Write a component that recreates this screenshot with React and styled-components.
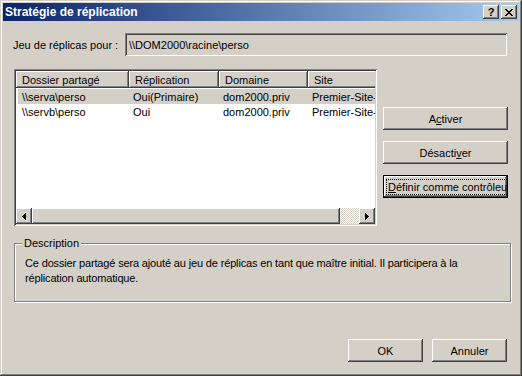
import React from "react";
import styled, { createGlobalStyle } from "styled-components";

const GlobalStyle = createGlobalStyle`
  html, body {
    margin: 0;
    padding: 0;
    background: #d4d0c8;
  }
  body {
    font-family: "Liberation Sans", Arial, sans-serif;
    font-size: 11px;
    color: #000;
  }
`;

const face = "#d4d0c8";

const raised = `
  background: ${face};
  box-shadow: inset -1px -1px #404040, inset 1px 1px #ffffff,
    inset -2px -2px #808080, inset 2px 2px ${face};
`;

const sunken = `
  box-shadow: inset 1px 1px #808080, inset -1px -1px #ffffff,
    inset 2px 2px #404040, inset -2px -2px ${face};
`;

const rows = [
  { dossier: "\\\\serva\\perso", replication: "Oui(Primaire)", domaine: "dom2000.priv", site: "Premier-Site-par-défaut", selected: true },
  { dossier: "\\\\servb\\perso", replication: "Oui", domaine: "dom2000.priv", site: "Premier-Site-par-défaut" },
];

const columns = [
  { label: "Dossier partagé", key: "dossier", width: 113 },
  { label: "Réplication", key: "replication", width: 90 },
  { label: "Domaine", key: "domaine", width: 89 },
  { label: "Site", key: "site", width: 120 },
];

const App = () => {
  return (
    <>
      <GlobalStyle />
      <Window>
        <TitleBar>
          <Title>Stratégie de réplication</Title>
          <TitleButton aria-label="Aide">
            <HelpGlyph>?</HelpGlyph>
          </TitleButton>
          <TitleButton aria-label="Fermer" $last>
            <svg width="8" height="7" viewBox="0 0 8 7" shapeRendering="crispEdges">
              <path d="M0 0h2v1h-2zM6 0h2v1h-2zM1 1h2v1h-2zM5 1h2v1h-2zM2 2h4v1h-4zM3 3h2v1h-2zM2 4h4v1h-4zM1 5h2v1h-2zM5 5h2v1h-2zM0 6h2v1h-2zM6 6h2v1h-2z" fill="#000" />
            </svg>
          </TitleButton>
        </TitleBar>

        <Body>
          <FieldRow>
            <FieldLabel>Jeu de réplicas pour :</FieldLabel>
            <Field>{"\\\\DOM2000\\racine\\perso"}</Field>
          </FieldRow>

          <MiddleRow>
            <ListView>
              <ListInner>
                <Header>
                  {columns.map((c) => (
                    <HeaderCell key={c.key} $w={c.width}>
                      {c.label}
                    </HeaderCell>
                  ))}
                </Header>
                <Rows>
                  {rows.map((r, i) => (
                    <Row key={i} $selected={r.selected}>
                      {columns.map((c) => (
                        <Cell key={c.key} $w={c.width}>
                          {r[c.key]}
                        </Cell>
                      ))}
                    </Row>
                  ))}
                </Rows>
                <ScrollBar>
                  <ArrowButton>
                    <svg width="4" height="7" viewBox="0 0 4 7" shapeRendering="crispEdges">
                      <path d="M0 3h1v1h-1zM1 2h1v3h-1zM2 1h1v5h-1zM3 0h1v7h-1z" fill="#000" />
                    </svg>
                  </ArrowButton>
                  <Thumb />
                  <Track />
                  <ArrowButton>
                    <svg width="4" height="7" viewBox="0 0 4 7" shapeRendering="crispEdges">
                      <path d="M0 0h1v7h-1zM1 1h1v5h-1zM2 2h1v3h-1zM3 3h1v1h-1z" fill="#000" />
                    </svg>
                  </ArrowButton>
                </ScrollBar>
              </ListInner>
            </ListView>

            <SideButtons>
              <Button>
                A<u>c</u>tiver
              </Button>
              <Button>
                Désacti<u>v</u>er
              </Button>
              <Button $default>
                <FocusText>
                  <u>D</u>éfinir comme contrôleur
                </FocusText>
              </Button>
            </SideButtons>
          </MiddleRow>

          <Group>
            <Legend>Description</Legend>
            <GroupText>
              Ce dossier partagé sera ajouté au jeu de réplicas en tant que maître initial. Il participera à la
              réplication automatique.
            </GroupText>
          </Group>

          <Footer>
            <Button $small>OK</Button>
            <Button $small>Annuler</Button>
          </Footer>
        </Body>
      </Window>
    </>
  );
};

const Window = styled.div`
  width: 522px;
  height: 376px;
  box-sizing: border-box;
  padding: 3px;
  background: ${face};
  box-shadow: inset -1px -1px #404040, inset 1px 1px ${face},
    inset -2px -2px #808080, inset 2px 2px #ffffff;
  display: flex;
  flex-direction: column;
`;

const TitleBar = styled.div`
  height: 18px;
  display: flex;
  align-items: center;
  padding: 0 2px 0 2px;
  background: linear-gradient(to right, #0a246a, #a6caf0);
`;

const Title = styled.div`
  flex: 1;
  color: #fff;
  font-weight: bold;
  font-size: 12px;
  white-space: nowrap;
`;

const TitleButton = styled.div`
  width: 16px;
  height: 14px;
  box-sizing: border-box;
  margin-left: ${(p) => (p.$last ? "2px" : "0")};
  display: flex;
  align-items: center;
  justify-content: center;
  ${raised}
`;

const HelpGlyph = styled.span`
  font-weight: bold;
  font-size: 11px;
  line-height: 11px;
  margin-top: 1px;
`;

const Body = styled.div`
  flex: 1;
  display: flex;
  flex-direction: column;
  padding: 12px 8px 0 11px;
`;

const FieldRow = styled.div`
  display: flex;
  align-items: center;
  margin-right: 4px;
`;

const FieldLabel = styled.div`
  width: 112px;
  margin-left: -1px;
  white-space: nowrap;
`;

const Field = styled.div`
  flex: 1;
  height: 23px;
  box-sizing: border-box;
  padding: 0 4px;
  display: flex;
  align-items: center;
  background: ${face};
  ${sunken}
`;

const MiddleRow = styled.div`
  display: flex;
  margin-top: 13px;
  margin-right: 4px;
  gap: 6px;
`;

const ListView = styled.div`
  width: 363px;
  height: 157px;
  box-sizing: border-box;
  padding: 2px;
  background: #fff;
  ${sunken}
`;

const ListInner = styled.div`
  height: 100%;
  display: flex;
  flex-direction: column;
  overflow: hidden;
`;

const Header = styled.div`
  display: flex;
  height: 17px;
  flex-shrink: 0;
`;

const HeaderCell = styled.div`
  width: ${(p) => p.$w}px;
  flex-shrink: 0;
  box-sizing: border-box;
  padding-left: 6px;
  display: flex;
  align-items: center;
  white-space: nowrap;
  overflow: hidden;
  background: ${face};
  box-shadow: inset -1px -1px #404040, inset 1px 1px #ffffff,
    inset -2px -2px #808080;
`;

const Rows = styled.div`
  flex: 1;
  padding-top: 1px;
`;

const Row = styled.div`
  display: flex;
  height: 15px;
  margin-left: 2px;
  background: ${(p) => (p.$selected ? face : "#fff")};
`;

const Cell = styled.div`
  width: ${(p) => p.$w}px;
  flex-shrink: 0;
  box-sizing: border-box;
  padding-left: 4px;
  display: flex;
  align-items: center;
  white-space: nowrap;
  overflow: hidden;
  &:first-child {
    width: ${(p) => p.$w - 2}px;
  }
`;

const ScrollBar = styled.div`
  display: flex;
  height: 16px;
  flex-shrink: 0;
`;

const ArrowButton = styled.div`
  width: 16px;
  height: 16px;
  flex-shrink: 0;
  display: flex;
  align-items: center;
  justify-content: center;
  ${raised}
`;

const Thumb = styled.div`
  width: 308px;
  height: 16px;
  flex-shrink: 0;
  ${raised}
`;

const Track = styled.div`
  flex: 1;
  background: repeating-conic-gradient(#ffffff 0 25%, ${face} 0 50%) 0 0 / 2px 2px;
`;

const SideButtons = styled.div`
  display: flex;
  flex-direction: column;
  gap: 11px;
  padding-top: 38px;
`;

const Button = styled.div`
  width: ${(p) => (p.$small ? "75px" : "125px")};
  height: 23px;
  box-sizing: border-box;
  display: flex;
  align-items: center;
  justify-content: center;
  white-space: nowrap;
  overflow: hidden;
  ${raised}
  ${(p) =>
    p.$default &&
    `
    box-shadow: inset 0 0 0 1px #000, inset -2px -2px #404040, inset 2px 2px #ffffff,
      inset -3px -3px #808080;
    justify-content: flex-start;
    padding-left: 4px;
  `}
`;

const FocusText = styled.span`
  outline: 1px dotted #000;
  outline-offset: 0;
  padding: 0 1px;
  line-height: 14px;
`;

const Group = styled.div`
  position: relative;
  margin-top: 17px;
  height: 59px;
  box-sizing: border-box;
  border: 1px solid #808080;
  box-shadow: inset 1px 1px #ffffff, 1px 1px #ffffff;
  padding: 12px 10px 0 10px;
`;

const Legend = styled.div`
  position: absolute;
  top: -7px;
  left: 7px;
  padding: 0 2px;
  background: ${face};
  line-height: 13px;
`;

const GroupText = styled.div`
  line-height: 15px;
  letter-spacing: -0.15px;
`;

const Footer = styled.div`
  display: flex;
  justify-content: flex-end;
  gap: 9px;
  margin-top: 37px;
  margin-right: 4px;
`;

export default App;
